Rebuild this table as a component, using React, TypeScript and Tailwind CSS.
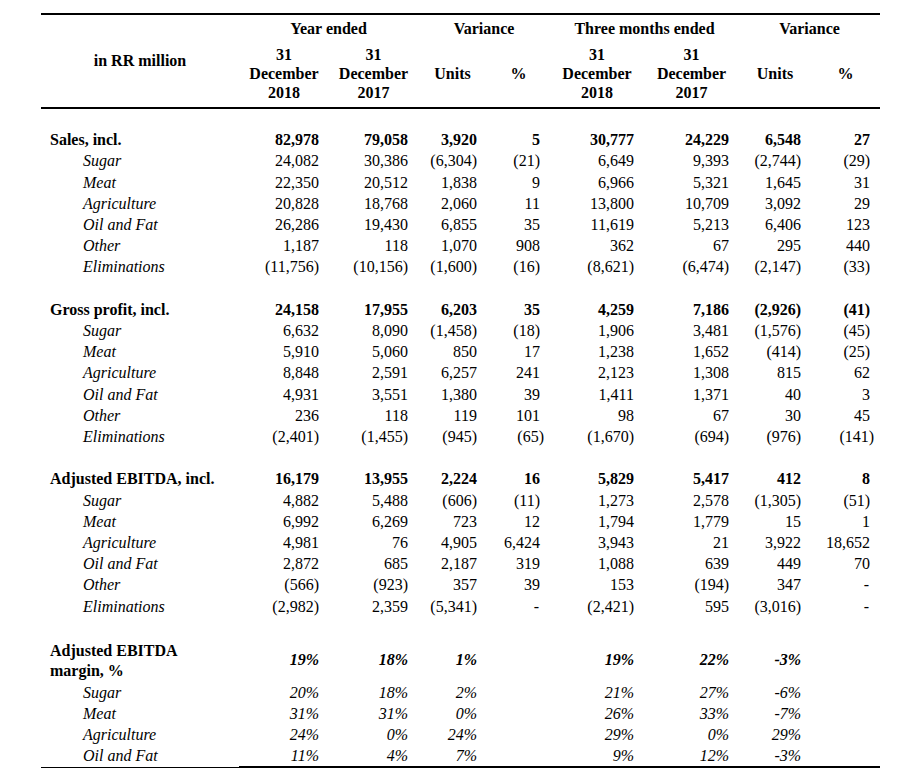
import React from 'react';

type Cell = string | [string, string];

interface Row {
  label: string;
  values: Cell[];
  head?: boolean;
}

const sections: Row[][] = [
  [
    { label: 'Sales, incl.', head: true, values: ['82,978', '79,058', '3,920', '5', '30,777', '24,229', '6,548', '27'] },
    { label: 'Sugar', values: ['24,082', '30,386', '(6,304)', '(21)', '6,649', '9,393', '(2,744)', '(29)'] },
    { label: 'Meat', values: ['22,350', '20,512', '1,838', '9', '6,966', '5,321', '1,645', '31'] },
    { label: 'Agriculture', values: ['20,828', '18,768', '2,060', '11', '13,800', '10,709', '3,092', '29'] },
    { label: 'Oil and Fat', values: ['26,286', '19,430', '6,855', '35', '11,619', '5,213', '6,406', '123'] },
    { label: 'Other', values: ['1,187', '118', '1,070', '908', '362', '67', '295', '440'] },
    { label: 'Eliminations', values: ['(11,756)', '(10,156)', '(1,600)', '(16)', '(8,621)', '(6,474)', '(2,147)', '(33)'] },
  ],
  [
    { label: 'Gross profit, incl.', head: true, values: ['24,158', '17,955', '6,203', '35', '4,259', '7,186', '(2,926)', '(41)'] },
    { label: 'Sugar', values: ['6,632', '8,090', '(1,458)', '(18)', '1,906', '3,481', '(1,576)', '(45)'] },
    { label: 'Meat', values: ['5,910', '5,060', '850', '17', '1,238', '1,652', '(414)', '(25)'] },
    { label: 'Agriculture', values: ['8,848', '2,591', '6,257', '241', '2,123', '1,308', '815', '62'] },
    { label: 'Oil and Fat', values: ['4,931', '3,551', '1,380', '39', '1,411', '1,371', '40', '3'] },
    { label: 'Other', values: ['236', '118', '119', '101', '98', '67', '30', '45'] },
    { label: 'Eliminations', values: ['(2,401)', '(1,455)', '(945)', ['(65)', 'pr-[6px]'], '(1,670)', '(694)', '(976)', ['(141)', 'pr-[6px]']] },
  ],
  [
    { label: 'Adjusted EBITDA, incl.', head: true, values: ['16,179', '13,955', '2,224', '16', '5,829', '5,417', '412', '8'] },
    { label: 'Sugar', values: ['4,882', '5,488', '(606)', '(11)', '1,273', '2,578', '(1,305)', '(51)'] },
    { label: 'Meat', values: ['6,992', '6,269', '723', '12', '1,794', '1,779', '15', '1'] },
    { label: 'Agriculture', values: ['4,981', '76', '4,905', '6,424', '3,943', '21', '3,922', '18,652'] },
    { label: 'Oil and Fat', values: ['2,872', '685', '2,187', '319', '1,088', '639', '449', '70'] },
    { label: 'Other', values: ['(566)', '(923)', '357', '39', '153', '(194)', '347', ['-', 'pr-[11px]']] },
    { label: 'Eliminations', values: ['(2,982)', '2,359', '(5,341)', ['-', 'pr-[11px]'], '(2,421)', '595', '(3,016)', ['-', 'pr-[11px]']] },
  ],
];

const margins: Row[] = [
  { label: 'Sugar', values: ['20%', '18%', '2%', '', '21%', '27%', '-6%', ''] },
  { label: 'Meat', values: ['31%', '31%', '0%', '', '26%', '33%', '-7%', ''] },
  { label: 'Agriculture', values: ['24%', '0%', '24%', '', '29%', '0%', '29%', ''] },
  { label: 'Oil and Fat', values: ['11%', '4%', '7%', '', '9%', '12%', '-3%', ''] },
];

const cellText = (c: Cell) => (Array.isArray(c) ? c[0] : c);
const cellPad = (c: Cell) => (Array.isArray(c) ? c[1] : 'pr-[10px]');

const Spacer = () => (
  <tr>
    <td colSpan={9} className="h-[21.2px] p-0" />
  </tr>
);

const App: React.FC = () => {
  return (
    <div className="min-h-screen bg-white pl-[41px] pt-[13px] font-['Liberation_Serif',serif] text-[16px] text-black">
      <table className="w-[839px] table-fixed border-collapse">
        <colgroup>
          <col className="w-[198px]" />
          <col className="w-[90px]" />
          <col className="w-[89px]" />
          <col className="w-[69px]" />
          <col className="w-[63px]" />
          <col className="w-[94px]" />
          <col className="w-[95px]" />
          <col className="w-[72px]" />
          <col className="w-[69px]" />
        </colgroup>

        {/* Column headers */}
        <thead>
          <tr className="border-t-2 border-black font-bold leading-[20px]">
            <th rowSpan={2} className="border-b-2 border-black p-0 text-center align-middle font-bold">
              in RR million
            </th>
            <th colSpan={2} className="p-0 pt-[4px] pb-[5px] text-center font-bold">Year ended</th>
            <th colSpan={2} className="p-0 pt-[4px] pb-[5px] text-center font-bold">Variance</th>
            <th colSpan={2} className="p-0 pt-[4px] pb-[5px] text-center font-bold">Three months ended</th>
            <th colSpan={2} className="p-0 pt-[4px] pb-[5px] text-center font-bold">Variance</th>
          </tr>
          <tr className="border-b-2 border-black leading-[19px]">
            {['2018', '2017', null, null, '2018', '2017', null, null].map((y, i) => (
              <th key={i} className="p-0 pt-[1px] pb-[5px] text-center align-middle font-bold">
                {y ? (
                  <>
                    31
                    <br />
                    December
                    <br />
                    {y}
                  </>
                ) : i % 4 === 2 ? (
                  'Units'
                ) : (
                  '%'
                )}
              </th>
            ))}
          </tr>
        </thead>

        <tbody>
          {sections.map((rows, si) => (
            <React.Fragment key={si}>
              <Spacer />
              {rows.map((r) => (
                <tr key={r.label} className={`leading-[21.2px] ${r.head ? 'font-bold' : ''}`}>
                  <td className={r.head ? 'p-0 pl-[9px] whitespace-nowrap' : 'p-0 pl-[42px] italic'}>{r.label}</td>
                  {r.values.map((v, i) => (
                    <td key={i} className={`p-0 text-right whitespace-nowrap ${cellPad(v)}`}>
                      {cellText(v)}
                    </td>
                  ))}
                </tr>
              ))}
            </React.Fragment>
          ))}

          <Spacer />
          {/* EBITDA margin block */}
          <tr className="font-bold">
            <td className="p-0 pl-[9px] pt-[3px] pb-[1px] leading-[20px]">
              Adjusted EBITDA
              <br />
              margin, %
            </td>
            {['19%', '18%', '1%', '', '19%', '22%', '-3%', ''].map((v, i) => (
              <td key={i} className="p-0 pr-[10px] text-right align-middle italic">
                {v}
              </td>
            ))}
          </tr>
          {margins.map((r, ri) => {
            const last = ri === margins.length - 1;
            return (
              <tr key={r.label} className="leading-[21px]">
                <td className={`p-0 pl-[42px] italic ${last ? 'border-b border-black' : ''}`}>{r.label}</td>
                {r.values.map((v, i) => (
                  <td key={i} className={`p-0 pr-[10px] text-right italic ${last ? 'border-b-2 border-black' : ''}`}>
                    {v}
                  </td>
                ))}
              </tr>
            );
          })}
        </tbody>
      </table>
    </div>
  );
};

export default App;
